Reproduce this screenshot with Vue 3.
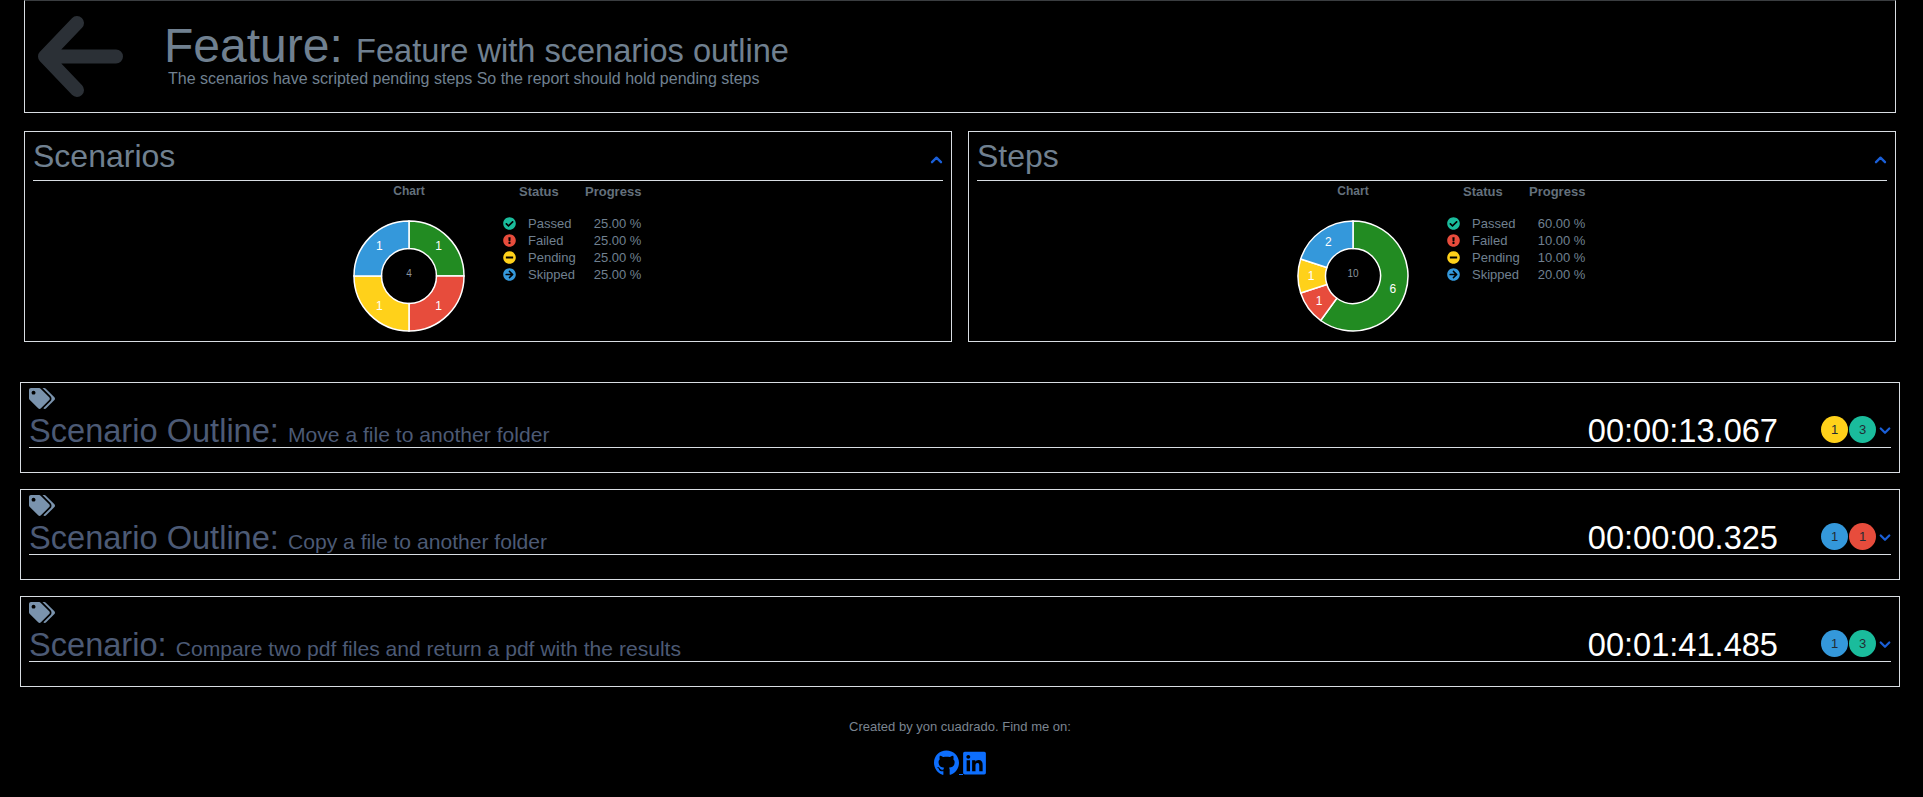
<template>
  <div class="page">
    <header class="feature-head">
      <svg class="back" viewBox="0 0 90 86" fill="none"><path d="M42 10 L10 43.5 L42 77 M10 43.5 H81" /></svg>
      <div class="feature-text">
        <div class="feature-title">Feature: <small>Feature with scenarios outline</small></div>
        <p>The scenarios have scripted pending steps So the report should hold pending steps</p>
      </div>
    </header>

    <section class="cards">
      <div v-for="card in cards" :key="card.title" class="card">
        <div class="card-head">
          <h2>{{ card.title }}</h2>
          <svg class="chev" viewBox="0 0 14 10"><path d="M2 8 L7 3 L12 8" /></svg>
        </div>
        <div class="card-body">
          <div class="chart-col">
            <div class="chart-label">Chart</div>
            <svg class="donut" viewBox="0 0 112 112">
              <path v-for="seg in segments(card.values)" :key="seg.color" :d="seg.d" :fill="seg.color" stroke="#fff" stroke-width="1.5" />
              <text v-for="seg in segments(card.values)" :key="seg.color + 't'" :x="seg.lx" :y="seg.ly" class="seg-label">{{ seg.value }}</text>
              <text x="56" y="57" class="center-label">{{ total(card.values) }}</text>
            </svg>
          </div>
          <table class="legend">
            <thead>
              <tr><th colspan="2" class="status-h">Status</th><th class="num">Progress</th></tr>
            </thead>
            <tbody>
              <tr v-for="(s, i) in statuses" :key="s.name">
                <td class="ic"><svg viewBox="0 0 512 512" :fill="s.color"><path :d="s.icon" /></svg></td>
                <td class="name">{{ s.name }}</td>
                <td class="num">{{ pct(card.values, i) }} %</td>
              </tr>
            </tbody>
          </table>
        </div>
      </div>
    </section>

    <section class="scenarios">
      <article v-for="sc in scenarios" :key="sc.name" class="scenario">
        <svg class="tags" viewBox="0 0 640 512" fill="#7a93ad"><path :d="tagsPath" /></svg>
        <div class="scenario-row">
          <div class="scenario-title">{{ sc.kind }}: <small>{{ sc.name }}</small></div>
          <div class="time">{{ sc.time }}</div>
          <div class="badges">
            <span v-for="b in sc.badges" :key="b.color" class="badge" :style="{ background: b.color }">{{ b.n }}</span>
          </div>
          <svg class="chev down" viewBox="0 0 14 10"><path d="M2 2 L7 7 L12 2" /></svg>
        </div>
      </article>
    </section>

    <footer class="foot">
      <p>Created by yon cuadrado. Find me on:</p>
      <div class="socials">
        <a href="#"><svg class="gh" viewBox="0 0 496 512" fill="#0d6efd"><path :d="githubPath" /></svg><span class="gap"> </span></a>
        <a href="#"><svg class="li" viewBox="0 0 448 512" fill="#0d6efd"><path :d="linkedinPath" /></svg></a>
      </div>
    </footer>
  </div>
</template>

<script setup>
const tagsPath = 'M497.941 225.941L286.059 14.059A48 48 0 0 0 252.118 0H48C21.49 0 0 21.49 0 48v204.118a48 48 0 0 0 14.059 33.941l211.882 211.882c18.744 18.745 49.136 18.746 67.882 0l204.118-204.118c18.745-18.745 18.745-49.137 0-67.882zM112 160c-26.51 0-48-21.49-48-48s21.49-48 48-48 48 21.49 48 48-21.49 48-48 48zm513.941 133.823L421.823 497.941c-18.745 18.745-49.137 18.745-67.882 0l-.36-.36L527.64 323.522c16.999-16.999 26.36-39.6 26.36-63.64s-9.362-46.641-26.36-63.64L331.397 0h48.721a48 48 0 0 1 33.941 14.059l211.882 211.882c18.745 18.745 18.745 49.137 0 67.882z'
const githubPath = 'M165.9 397.4c0 2-2.3 3.6-5.2 3.6-3.3 0-5.6-1.6-5.6-3.6 0-2 2.3-3.6 5.2-3.6 3-.3 5.6 1.3 5.6 3.6zm-31.1-4.5c-.7 2 1.3 4.3 4.3 4.9 2.6 1 5.6 0 6.2-2s-1.3-4.3-4.3-5.2c-2.6-.7-5.5.3-6.2 2.3zm44.2-1.7c-2.9.7-4.9 2.6-4.6 4.9.3 2 2.9 3.3 5.9 2.6 2.9-.7 4.9-2.6 4.6-4.6-.3-1.9-3-3.2-5.9-2.9zM244.8 8C106.1 8 0 113.3 0 252c0 110.9 69.8 205.8 169.5 239.2 12.8 2.3 17.3-5.6 17.3-12.1 0-6.2-.3-40.4-.3-61.4 0 0-70 15-84.7-29.8 0 0-11.4-29.1-27.8-36.6 0 0-22.9-15.7 1.6-15.4 0 0 24.9 2 38.6 25.8 21.9 38.6 58.6 27.5 72.9 20.9 2.3-16 8.8-27.1 16-33.7-55.9-6.2-112.3-14.3-112.3-110.5 0-27.5 7.6-41.3 23.6-58.9-2.6-6.5-11.1-33.3 2.6-67.9 20.9-6.5 69 27 69 27 20-5.6 41.5-8.5 62.8-8.5s42.8 2.9 62.8 8.5c0 0 48.1-33.6 69-27 13.7 34.7 5.2 61.4 2.6 67.9 16 17.7 25.8 31.5 25.8 58.9 0 96.5-58.9 104.2-114.8 110.5 9.2 7.9 17 22.9 17 46.4 0 33.7-.3 75.4-.3 83.6 0 6.5 4.6 14.4 17.3 12.1C428.2 457.8 496 362.9 496 252 496 113.3 383.5 8 244.8 8z'
const linkedinPath = 'M416 32H31.9C14.3 32 0 46.5 0 64.3v383.4C0 465.5 14.3 480 31.9 480H416c17.6 0 32-14.5 32-32.3V64.3c0-17.8-14.4-32.3-32-32.3zM135.4 416H69V202.2h66.5V416zm-33.2-243c-21.3 0-38.5-17.3-38.5-38.5S80.9 96 102.2 96c21.2 0 38.5 17.3 38.5 38.5 0 21.3-17.2 38.5-38.5 38.5zm282.1 243h-66.4V312c0-24.8-.5-56.7-34.5-56.7-34.6 0-39.9 27-39.9 54.9V416h-66.4V202.2h63.7v29.2h.9c8.9-16.8 30.6-34.5 62.9-34.5 67.2 0 79.7 44.3 79.7 101.9V416z'

const GREEN = '#228b22'
const RED = '#e74c3c'
const YELLOW = '#ffd11a'
const BLUE = '#3498db'
const TEAL = '#1abc9c'

const statuses = [
  { name: 'Passed', color: TEAL, icon: 'M504 256c0 136.967-111.033 248-248 248S8 392.967 8 256 119.033 8 256 8s248 111.033 248 248zM227.314 387.314l184-184c6.248-6.248 6.248-16.379 0-22.627l-22.627-22.627c-6.248-6.249-16.379-6.249-22.628 0L216 308.118l-70.059-70.059c-6.248-6.248-16.379-6.248-22.628 0l-22.627 22.627c-6.248 6.248-6.248 16.379 0 22.627l104 104c6.249 6.249 16.379 6.249 22.628.001z' },
  { name: 'Failed', color: RED, icon: 'M504 256c0 136.997-111.043 248-248 248S8 392.997 8 256C8 119.083 119.043 8 256 8s248 111.083 248 248zm-248 50c-25.405 0-46 20.595-46 46s20.595 46 46 46 46-20.595 46-46-20.595-46-46-46zm-43.673-165.346l7.418 136c.347 6.364 5.609 11.346 11.982 11.346h48.546c6.373 0 11.635-4.982 11.982-11.346l7.418-136c.375-6.874-5.098-12.654-11.982-12.654h-63.383c-6.884 0-12.356 5.78-11.981 12.654z' },
  { name: 'Pending', color: YELLOW, icon: 'M256 8C119 8 8 119 8 256s111 248 248 248 248-111 248-248S393 8 256 8zM124 296c-6.6 0-12-5.4-12-12v-56c0-6.6 5.4-12 12-12h264c6.6 0 12 5.4 12 12v56c0 6.6-5.4 12-12 12H124z' },
  { name: 'Skipped', color: BLUE, icon: 'M256 8c137 0 248 111 248 248S393 504 256 504 8 393 8 256 119 8 256 8zm-28.9 143.6l75.5 72.4H120c-13.3 0-24 10.7-24 24v16c0 13.3 10.7 24 24 24h182.6l-75.5 72.4c-9.7 9.3-9.9 24.8-.4 34.3l11 10.9c9.4 9.4 24.6 9.4 33.9 0L404.3 273c9.4-9.4 9.4-24.6 0-33.9L271.6 106.3c-9.4-9.4-24.6-9.4-33.9 0l-11 10.9c-9.3 9.6-9.1 25.1.4 34.4z' }
]

const cards = [
  { title: 'Scenarios', values: [1, 1, 1, 1] },
  { title: 'Steps', values: [6, 1, 1, 2] }
]

const scenarios = [
  { kind: 'Scenario Outline', name: 'Move a file to another folder', time: '00:00:13.067', badges: [{ n: 1, color: YELLOW }, { n: 3, color: TEAL }] },
  { kind: 'Scenario Outline', name: 'Copy a file to another folder', time: '00:00:00.325', badges: [{ n: 1, color: BLUE }, { n: 1, color: RED }] },
  { kind: 'Scenario', name: 'Compare two pdf files and return a pdf with the results', time: '00:01:41.485', badges: [{ n: 1, color: BLUE }, { n: 3, color: TEAL }] }
]

const total = (values) => values.reduce((a, b) => a + b, 0)
const pct = (values, i) => ((values[i] / total(values)) * 100).toFixed(2)

const segments = (values) => {
  const colors = [GREEN, RED, YELLOW, BLUE]
  const sum = total(values)
  const R = 55
  const r = 27.5
  const pt = (rad, a) => [56 + rad * Math.sin(a), 56 - rad * Math.cos(a)]
  let start = 0
  return values.map((value, i) => {
    const end = start + (value / sum) * Math.PI * 2
    const large = end - start > Math.PI ? 1 : 0
    const [x1, y1] = pt(R, start)
    const [x2, y2] = pt(R, end)
    const [x3, y3] = pt(r, end)
    const [x4, y4] = pt(r, start)
    const [lx, ly] = pt(42, (start + end) / 2)
    start = end
    return {
      value,
      color: colors[i],
      lx,
      ly: ly + 4,
      d: `M${x1} ${y1}A${R} ${R} 0 ${large} 1 ${x2} ${y2}L${x3} ${y3}A${r} ${r} 0 ${large} 0 ${x4} ${y4}Z`
    }
  })
}
</script>

<style>
html, body { background: #000; overflow: hidden; }
</style>

<style scoped>
.page {
  width: 1920px;
  height: 797px;
  background: #000;
  font-family: "Liberation Sans", Arial, sans-serif;
  color: #708090;
  box-sizing: border-box;
}

.feature-head {
  margin: 0 24px;
  height: 113px;
  box-sizing: border-box;
  border: 1px solid #d8dde2;
  border-top-color: #3a3d40;
  display: flex;
  padding: 12px 0 0 10px;
}

.back {
  width: 90px;
  height: 86px;
  flex: none;
  stroke: #2b3036;
  stroke-width: 14;
  stroke-linecap: round;
  stroke-linejoin: round;
}
.back path { fill: none; }

.feature-text { margin-left: 39px; padding-top: 4px; }

.feature-title {
  font-size: 48px;
  line-height: 57px;
  white-space: nowrap;
}
.feature-title small { font-size: 32.6px; }

.feature-text p {
  margin: -10px 0 0 4px;
  font-size: 16px;
  line-height: 20px;
}

.cards {
  display: flex;
  gap: 16px;
  margin: 18px 24px 0;
}

.card {
  flex: 1;
  height: 211px;
  box-sizing: border-box;
  border: 1px solid #d8dde2;
  padding: 0 8px;
}

.card-head {
  display: flex;
  justify-content: space-between;
  align-items: flex-end;
  height: 48px;
  border-bottom: 1px solid #d8dde2;
}
.card-head h2 {
  margin: 0 0 5px;
  font-size: 32px;
  font-weight: 400;
  line-height: 38px;
  color: #708090;
}

.chev {
  width: 14px;
  height: 10px;
  fill: none;
  stroke: #1a5fd8;
  stroke-width: 2.6;
  stroke-linecap: round;
  stroke-linejoin: round;
  flex: none;
}
.card-head .chev { width: 13px; height: 9px; margin-bottom: 16px; }

.card-body {
  display: flex;
  padding-left: 320px;
}

.chart-col {
  width: 112px;
  flex: none;
  text-align: center;
  padding-top: 3px;
}
.chart-label {
  font-size: 12px;
  font-weight: 700;
  line-height: 14px;
  color: #64707c;
}
.donut {
  display: block;
  width: 112px;
  height: 112px;
  margin-top: 22px;
}
.seg-label {
  font-size: 12px;
  fill: #fff;
  text-anchor: middle;
  font-family: "Liberation Sans", Arial, sans-serif;
}
.center-label {
  font-size: 10px;
  fill: #8a939c;
  text-anchor: middle;
  font-family: "Liberation Sans", Arial, sans-serif;
}

.legend {
  margin: 3px 0 0 38px;
  border-collapse: collapse;
  font-size: 13px;
  color: #708090;
  align-self: flex-start;
}
.legend th {
  font-size: 13px;
  font-weight: 700;
  line-height: 15px;
  padding: 0 0 16px;
  color: #64707c;
  text-align: left;
}
.legend td {
  padding: 0;
  height: 17px;
  line-height: 17px;
}
.legend .ic { width: 25px; }
.legend .ic svg { display: block; width: 13px; height: 13px; }
.legend .name { width: 57px; }
.legend .status-h { padding-left: 16px; }
.legend .num { text-align: right; width: 55px; }

.scenarios {
  display: flex;
  flex-direction: column;
  gap: 16px;
  margin: 40px 20px 0;
}

.scenario {
  height: 91px;
  box-sizing: border-box;
  border: 1px solid #d8dde2;
  padding: 5px 8px 0;
}
.tags {
  display: block;
  width: 26px;
  height: 21px;
}

.scenario-row {
  display: flex;
  align-items: flex-end;
  height: 38px;
  border-bottom: 1px solid #d8dde2;
}
.scenario-title {
  flex: 1;
  font-size: 32.6px;
  line-height: 25px;
  color: #4c5a75;
  white-space: nowrap;
}
.scenario-title small { font-size: 21.1px; }

.time {
  font-size: 32.6px;
  line-height: 32px;
  color: #fff;
  margin-right: 43px;
}

.badges { display: flex; gap: 1px; margin-bottom: 4px; }
.badge {
  width: 27px;
  height: 27px;
  border-radius: 50%;
  display: flex;
  align-items: center;
  justify-content: center;
  font-size: 13px;
  color: #222b33;
}

.chev.down { margin: 0 0 11px 3px; width: 12px; }

.foot {
  text-align: center;
  font-size: 13px;
  color: #7b8590;
  margin-top: 32px;
}
.foot p { margin: 0; line-height: 16px; }

.socials {
  display: flex;
  justify-content: center;
  align-items: flex-end;
  margin-top: 15px;
}
.socials a { color: #0d6efd; display: inline-flex; align-items: flex-end; }
.socials svg { display: block; height: 26px; }
.socials .gh { width: 25px; }
.socials .li { width: 23px; }
.socials .gap { display: block; width: 4px; height: 1px; background: #0d6efd; margin-bottom: 1px; }
</style>
